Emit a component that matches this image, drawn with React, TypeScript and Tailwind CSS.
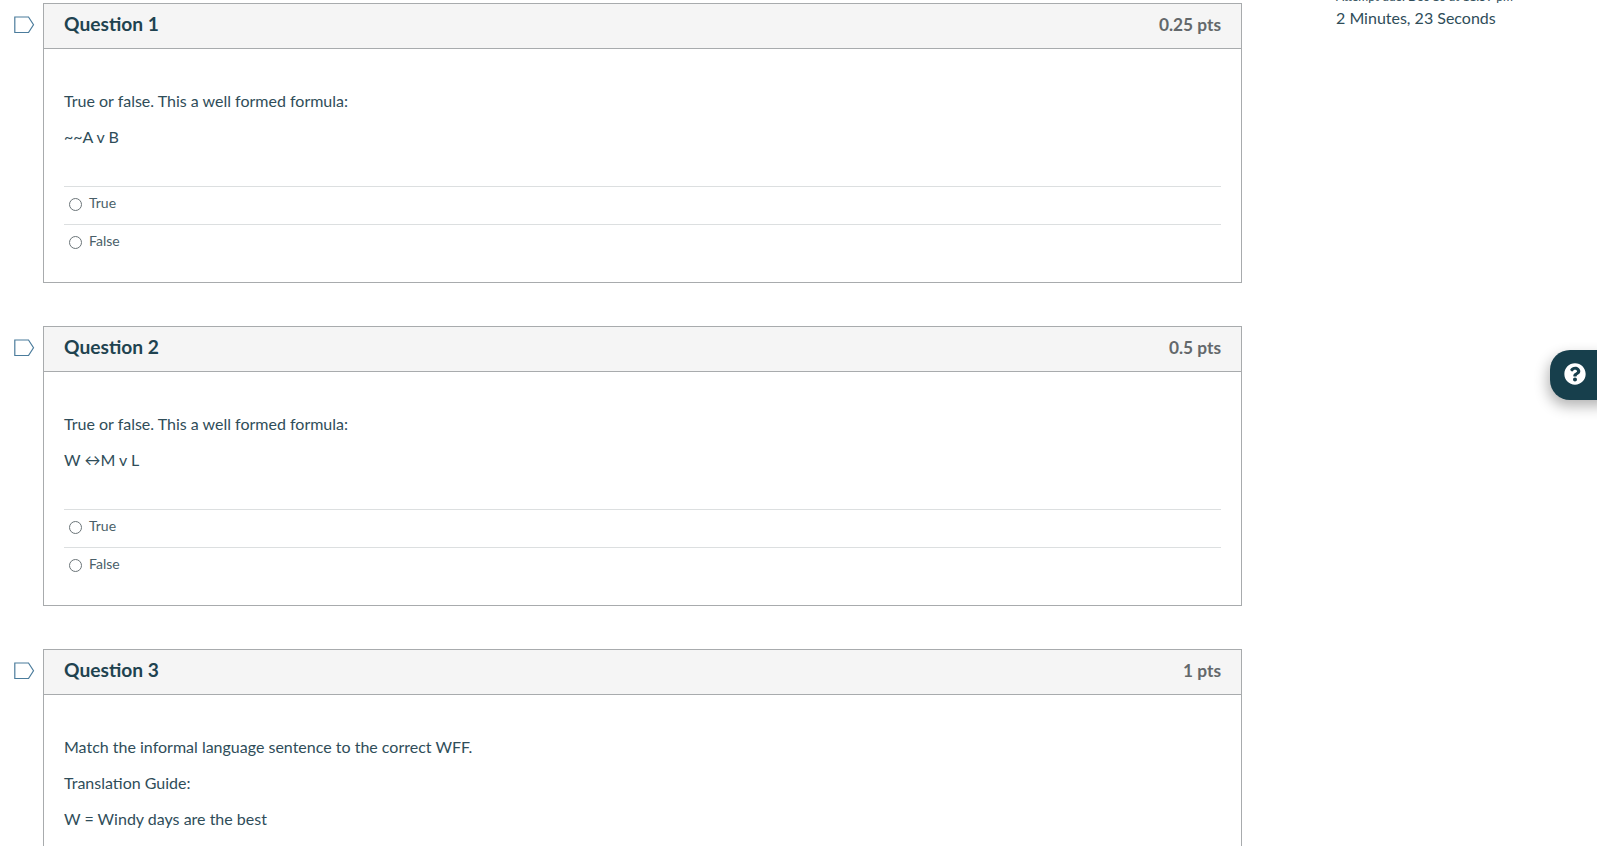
import { FaQuestionCircle } from 'react-icons/fa';

function Tag() {
  return (
    <svg width="21" height="17" viewBox="0 0 21 17" className="mt-[13px] shrink-0" fill="none">
      <path d="M0.8 1H14.5L19.5 8.8L14.5 16.5H0.8Z" stroke="#4b7c9c" strokeWidth="1.2" />
    </svg>
  );
}

function Answer({ label }: { label: string }) {
  return (
    <div className="flex items-center h-[38px] pl-[5px] pb-[3px] border-t border-[#dcdfe0]">
      <span className="w-[13px] h-[13px] rounded-full border border-[#6b7478] bg-white shrink-0 mt-[1px]" />
      <span className="ml-[7px] text-[14px] text-[#4a5f69] -mt-[3px]">{label}</span>
    </div>
  );
}

function Question({ title, pts, children, answers = true }: { title: string; pts: string; children: React.ReactNode; answers?: boolean }) {
  return (
    <div className="flex">
      <div className="w-[43px] pl-[14px] shrink-0">
        <Tag />
      </div>
      <div className="w-[1199px] border border-[#a8abad] bg-white">
        <div className="flex items-center justify-between h-[45px] pb-[3px] bg-[#f5f5f5] border-b border-[#a8abad] px-5">
          <h2 className="text-[19.2px] font-bold text-[#1f4350]">{title}</h2>
          <span className="text-[17.3px] font-bold text-[#63686b]">{pts}</span>
        </div>
        <div className="px-5 pt-[40px] text-[16px] text-[#2f4d59]">
          {children}
          {answers ? (
            <div className="mt-[37px] pb-[20px]">
              <Answer label="True" />
              <Answer label="False" />
            </div>
          ) : (
            <div className="h-[60px]" />
          )}
        </div>
      </div>
    </div>
  );
}

export default function App() {
  return (
    <div className="relative h-[846px] w-[1597px] overflow-hidden bg-white font-['Lato','Open_Sans',sans-serif]">
      <div className="flex -mt-[17px]">
        <main className="w-[1242px] shrink-0 pt-[20px] flex flex-col gap-[43px]">
          <Question title="Question 1" pts="0.25 pts">
            <p className="leading-[24px]">True or false. This a well formed formula:</p>
            <p className="mt-3 leading-[24px]">~~A v B</p>
          </Question>
          <Question title="Question 2" pts="0.5 pts">
            <p className="leading-[24px]">True or false. This a well formed formula:</p>
            <p className="mt-3 leading-[24px]">W ↔M v L</p>
          </Question>
          <Question title="Question 3" pts="1 pts" answers={false}>
            <p className="leading-[24px]">Match the informal language sentence to the correct WFF.</p>
            <p className="mt-3 leading-[24px]">Translation Guide:</p>
            <p className="mt-3 leading-[24px]">W = Windy days are the best</p>
          </Question>
        </main>
        <aside className="ml-[94px] mt-[5px] text-[#2f4d59]">
          <p className="text-[12px] leading-[18px]">Attempt due: Dec 10 at 11:59 pm</p>
          <p className="text-[16px] leading-[24px]">2 Minutes, 23 Seconds</p>
        </aside>
      </div>
      <button className="absolute left-[1550px] top-[350px] w-[60px] h-[50px] rounded-l-[20px] bg-[#173f4c] shadow-[-2px_6px_14px_rgba(0,0,0,0.3)] flex items-center pl-[14px] pb-[3px]">
        <FaQuestionCircle className="w-[22px] h-[22px] text-white" />
      </button>
    </div>
  );
}
